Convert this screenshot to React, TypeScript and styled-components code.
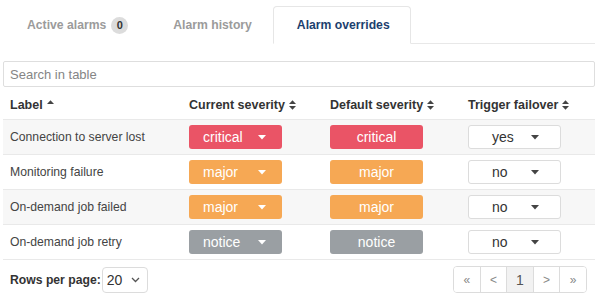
import styled, { createGlobalStyle } from "styled-components";

const GlobalStyle = createGlobalStyle`
  body {
    margin: 0;
    background: #fff;
    font-family: "Liberation Sans", Arial, sans-serif;
    color: #333;
  }
`;

type Severity = "critical" | "major" | "notice";

const severityColor: Record<Severity, string> = {
  critical: "#ea5466",
  major: "#f6a854",
  notice: "#9a9fa3",
};

const rows: { label: string; current: Severity; def: Severity; failover: string }[] = [
  { label: "Connection to server lost", current: "critical", def: "critical", failover: "yes" },
  { label: "Monitoring failure", current: "major", def: "major", failover: "no" },
  { label: "On-demand job failed", current: "major", def: "major", failover: "no" },
  { label: "On-demand job retry", current: "notice", def: "notice", failover: "no" },
];

function Caret({ color }: { color: string }) {
  return (
    <svg width="8" height="5" viewBox="0 0 8 5">
      <path d="M0 0h8L4 4.5z" fill={color} />
    </svg>
  );
}

function SortIcon({ up }: { up?: boolean }) {
  return (
    <svg width="7" height="10" viewBox="0 0 7 10">
      <path d="M0 4h7L3.5 0.3z" fill="#444" />
      {!up && <path d="M0 6h7L3.5 9.7z" fill="#444" />}
    </svg>
  );
}

export default function App() {
  return (
    <Page>
      <GlobalStyle />
      <Tabs>
        <Tab>
          Active alarms<Count>0</Count>
        </Tab>
        <Tab>Alarm history</Tab>
        <Tab $active>Alarm overrides</Tab>
      </Tabs>
      <Search placeholder="Search in table" />
      <Table>
        <HeadRow>
          <HeadCell>
            Label <SortIcon up />
          </HeadCell>
          <HeadCell>
            Current severity <SortIcon />
          </HeadCell>
          <HeadCell>
            Default severity <SortIcon />
          </HeadCell>
          <HeadCell>
            Trigger failover <SortIcon />
          </HeadCell>
        </HeadRow>
        {rows.map((r, i) => (
          <Row key={r.label} $striped={i % 2 === 0}>
            <Cell>{r.label}</Cell>
            <Cell>
              <SeverityPick $color={severityColor[r.current]}>
                <span>{r.current}</span>
                <Caret color="#fff" />
              </SeverityPick>
            </Cell>
            <Cell>
              <SeverityBadge $color={severityColor[r.def]}>{r.def}</SeverityBadge>
            </Cell>
            <Cell>
              <FailoverPick>
                <span>{r.failover}</span>
                <Caret color="#444" />
              </FailoverPick>
            </Cell>
          </Row>
        ))}
      </Table>
      <Footer>
        <PageSize>
          Rows per page:
          <SizeSelect>
            20
            <svg width="9" height="6" viewBox="0 0 9 6">
              <path d="M1 1l3.5 3.5L8 1" fill="none" stroke="#555" strokeWidth="1.3" />
            </svg>
          </SizeSelect>
        </PageSize>
        <Pager>
          <PageBtn>«</PageBtn>
          <PageBtn>&lt;</PageBtn>
          <PageBtn $current>1</PageBtn>
          <PageBtn>&gt;</PageBtn>
          <PageBtn>»</PageBtn>
        </Pager>
      </Footer>
    </Page>
  );
}

const Page = styled.div`
  width: 592px;
  padding-left: 3px;
`;

const Tabs = styled.div`
  display: flex;
  padding-top: 6px;
  border-bottom: 1px solid #e8e8e8;
`;

const Tab = styled.div<{ $active?: boolean }>`
  display: flex;
  align-items: center;
  gap: 5px;
  height: 36px;
  padding: 0 20px 0 23px;
  margin-bottom: -1px;
  font-size: 12.2px;
  font-weight: 700;
  color: ${(p) => (p.$active ? "#1c3f6e" : "#9b9b9b")};
  background: #fff;
  border: 1px solid ${(p) => (p.$active ? "#e6e6e6" : "transparent")};
  border-bottom-color: ${(p) => (p.$active ? "#fff" : "transparent")};
  border-radius: 4px 4px 0 0;
`;

const Count = styled.span`
  display: inline-flex;
  align-items: center;
  justify-content: center;
  width: 17px;
  height: 17px;
  border-radius: 50%;
  background: #dcdcdc;
  color: #333;
  font-size: 11px;
`;

const Search = styled.input`
  display: block;
  box-sizing: border-box;
  width: 100%;
  height: 26px;
  margin-top: 17px;
  padding: 0 6px;
  border: 1px solid #dedede;
  border-radius: 2px;
  font-family: inherit;
  font-size: 13px;
  outline: none;
  &::placeholder {
    color: #858585;
  }
`;

const Table = styled.div`
  margin-top: 3px;
  display: flex;
  flex-direction: column;
`;

const grid = `
  display: grid;
  grid-template-columns: 179px 141px 138px 1fr;
`;

const HeadRow = styled.div`
  ${grid}
  height: 29px;
  align-items: center;
`;

const HeadCell = styled.div`
  display: flex;
  align-items: center;
  gap: 4px;
  padding-left: 7px;
  font-size: 12.5px;
  font-weight: 700;
  color: #333;
`;

const Row = styled.div<{ $striped: boolean }>`
  ${grid}
  height: 34px;
  align-items: center;
  border-top: 1px solid #e9e9e9;
  background: ${(p) => (p.$striped ? "#f7f7f7" : "#fff")};
  &:last-child {
    border-bottom: 1px solid #e9e9e9;
  }
`;

const Cell = styled.div`
  padding-left: 7px;
  font-size: 12.2px;
  color: #444;
`;

const pill = `
  box-sizing: border-box;
  width: 93px;
  height: 24px;
  border-radius: 3px;
  font-size: 14px;
  display: flex;
  align-items: center;
`;

const SeverityPick = styled.div<{ $color: string }>`
  ${pill}
  justify-content: space-between;
  padding: 0 16px 0 14px;
  background: ${(p) => p.$color};
  color: #fff;
`;

const SeverityBadge = styled.div<{ $color: string }>`
  ${pill}
  justify-content: center;
  background: ${(p) => p.$color};
  color: #fff;
`;

const FailoverPick = styled.div`
  ${pill}
  justify-content: space-between;
  padding: 0 21px 0 23px;
  background: #fff;
  border: 1px solid #dcdcdc;
  color: #333;
`;

const Footer = styled.div`
  display: flex;
  align-items: center;
  justify-content: space-between;
  padding: 6px 8px 0 7px;
`;

const PageSize = styled.div`
  display: flex;
  align-items: center;
  gap: 1px;
  font-size: 12.2px;
  font-weight: 700;
  color: #333;
`;

const SizeSelect = styled.div`
  box-sizing: border-box;
  display: flex;
  align-items: center;
  justify-content: space-between;
  width: 46px;
  height: 26px;
  padding: 0 7px 0 4px;
  border: 1px solid #dcdcdc;
  border-radius: 4px;
  font-size: 14px;
  font-weight: 400;
  color: #333;
`;

const Pager = styled.div`
  display: flex;
  border: 1px solid #dcdcdc;
  border-radius: 4px;
  overflow: hidden;
`;

const PageBtn = styled.div<{ $current?: boolean }>`
  width: 25.6px;
  height: 25px;
  display: flex;
  align-items: center;
  justify-content: center;
  font-size: ${(p) => (p.$current ? "14px" : "12px")};
  color: ${(p) => (p.$current ? "#555" : "#888")};
  background: ${(p) => (p.$current ? "#f2f2f2" : "#fff")};
  & + & {
    border-left: 1px solid #dcdcdc;
  }
`;
